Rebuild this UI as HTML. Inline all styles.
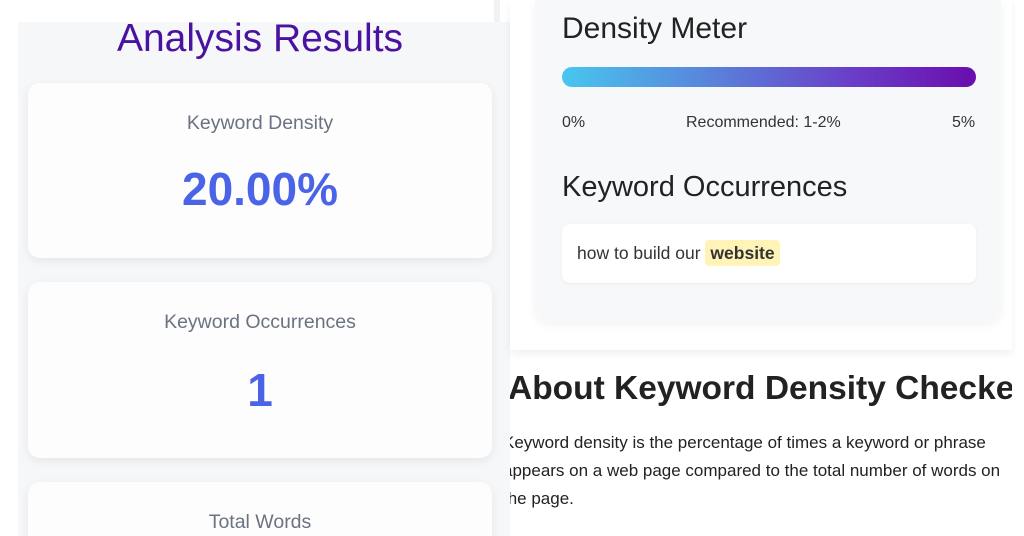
<!DOCTYPE html>
<html><head><meta charset="utf-8"><style>
*{margin:0;padding:0;box-sizing:border-box}
html,body{width:1024px;height:536px;overflow:hidden}
body{background:#fff;font-family:"Liberation Sans",sans-serif;position:relative}
.abs{position:absolute}
.left{left:18px;top:22px;width:492px;height:514px;background:#f6f7f9}
.card{position:absolute;left:28px;width:464px;background:#fdfdfe;border-radius:12px;box-shadow:0 3px 10px rgba(0,0,0,.07);text-align:center}
.lbl{color:#6b7280;font-size:19.5px;position:absolute;width:100%;top:29px}
.val{color:#4a63e7;font-weight:bold;position:absolute;width:100%}
.right{left:510px;top:0;width:502px;height:350px;background:#fff;box-shadow:0 4px 8px rgba(0,0,0,.06)}
.inner{left:535px;top:0;width:466px;height:322px;background:#f7f8fa;border-radius:0 0 14px 14px;box-shadow:0 3px 10px rgba(0,0,0,.05)}
h2{font-weight:normal;color:#222;position:absolute;left:562px;white-space:nowrap}
.clip{left:510px;top:352px;width:502px;height:184px;overflow:hidden}
</style></head><body>
<div class="abs" style="left:494px;top:0;width:6px;height:22px;background:#f1f2f4"></div>
<div class="abs left"></div>
<div class="abs" style="left:18px;top:17px;width:484px;text-align:center;font-size:39px;color:#4a12a0">Analysis Results</div>
<div class="card" style="top:83px;height:175px"><div class="lbl">Keyword Density</div><div class="val" style="top:79px;font-size:46px">20.00%</div></div>
<div class="card" style="top:282px;height:176px"><div class="lbl">Keyword Occurrences</div><div class="val" style="top:81px;font-size:46px">1</div></div>
<div class="card" style="top:482px;height:80px"><div class="lbl">Total Words</div></div>
<div class="abs right"></div>
<div class="abs inner"></div>
<h2 style="top:12px;font-size:30px">Density Meter</h2>
<div class="abs" style="left:562px;top:67px;width:414px;height:20px;border-radius:10px;background:linear-gradient(90deg,#48c6ef,#5b7bd8 40%,#6a3ec8 70%,#6a0dad)"></div>
<div class="abs" style="left:562px;top:114px;font-size:16px;color:#333">0%</div>
<div class="abs" style="left:686px;top:114px;font-size:16px;color:#333">Recommended: 1-2%</div>
<div class="abs" style="left:952px;top:114px;font-size:16px;color:#333">5%</div>
<h2 style="top:171px;font-size:29px">Keyword Occurrences</h2>
<div class="abs" style="left:562px;top:224px;width:414px;height:59px;background:#fff;border-radius:8px;box-shadow:0 1px 4px rgba(0,0,0,.05);font-size:17.5px;color:#333;padding:19px 15px;white-space:nowrap">how to build our <span style="background:#fff3b8;font-weight:bold;padding:3px 5px;border-radius:4px">website</span></div>
<div class="abs clip">
<div style="position:absolute;left:-2px;top:18px;font-size:33.5px;font-weight:bold;color:#222;white-space:nowrap">About Keyword Density Checker</div>
<div style="position:absolute;left:-7px;top:77px;font-size:17px;line-height:28px;color:#222;white-space:nowrap">Keyword density is the percentage of times a keyword or phrase<br>appears on a web page compared to the total number of words on<br>the page.</div>
</div>
</body></html>
